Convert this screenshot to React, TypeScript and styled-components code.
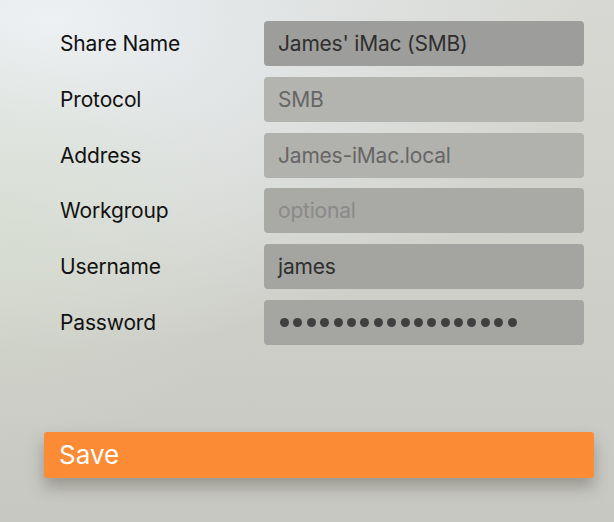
import React from "react";
import styled, { createGlobalStyle } from "styled-components";

const Global = createGlobalStyle`
  html, body { margin: 0; padding: 0; }
  body {
    width: 614px;
    height: 522px;
    overflow: hidden;
    font-family: Inter, "Noto Sans", sans-serif;
  }
`;

const Screen = styled.div`
  width: 614px;
  height: 522px;
  box-sizing: border-box;
  padding: 21px 20px 0 44px;
  background:
    radial-gradient(ellipse 260px 220px at 0% 45%, rgba(214, 222, 204, 0.55), rgba(214, 222, 204, 0) 100%),
    radial-gradient(ellipse 540px 330px at 8% 4%, #eef1f4 0%, #e3e6e7 35%, rgba(214, 215, 210, 0) 100%),
    linear-gradient(180deg, #d7d8d3 0%, #cfd0ca 50%, #c8c8c2 100%);
  display: flex;
  flex-direction: column;
`;

const Form = styled.div`
  display: grid;
  grid-template-columns: 204px 320px;
  grid-auto-rows: 45px;
  row-gap: 10.8px;
  padding-left: 16px;
`;

const Label = styled.div`
  display: flex;
  align-items: center;
  font-size: 21px;
  color: #111;
  letter-spacing: -0.15px;
`;

const Field = styled.div<{ $bg: string; $color: string }>`
  display: flex;
  align-items: center;
  padding: 0 13px 0 14px;
  border-radius: 4px;
  background: ${(p) => p.$bg};
  color: ${(p) => p.$color};
  font-size: 21px;
  letter-spacing: -0.2px;
`;

const Dots = styled.div`
  display: flex;
  gap: 4.4px;
  margin-left: 2px;
`;

const Dot = styled.span`
  width: 9px;
  height: 9px;
  border-radius: 50%;
  background: #3f3f3f;
`;

const SaveButton = styled.button`
  margin-top: 87px;
  width: 550px;
  height: 46px;
  border: none;
  border-radius: 3px;
  background: #fc8b35;
  color: #fff;
  font-family: Inter, "Noto Sans", sans-serif;
  font-size: 26px;
  text-align: left;
  padding: 0 0 0 15px;
  box-shadow: 0 9px 16px rgba(60, 60, 50, 0.35);
`;

type Row = { label: string; value?: string; bg: string; color: string; password?: boolean };

const rows: Row[] = [
  { label: "Share Name", value: "James' iMac (SMB)", bg: "#9d9d9b", color: "#2f2f2f" },
  { label: "Protocol", value: "SMB", bg: "#b3b3b0", color: "#666664" },
  { label: "Address", value: "James-iMac.local", bg: "#b1b1ae", color: "#666664" },
  { label: "Workgroup", value: "optional", bg: "#a9a9a6", color: "#8a8a88" },
  { label: "Username", value: "james", bg: "#a4a4a1", color: "#2f2f2f" },
  { label: "Password", bg: "#a5a5a2", color: "#2f2f2f", password: true },
];

export default function App() {
  return (
    <Screen>
      <Global />
      <Form>
        {rows.map((r) => (
          <React.Fragment key={r.label}>
            <Label>{r.label}</Label>
            <Field $bg={r.bg} $color={r.color}>
              {r.password ? (
                <Dots>
                  {Array.from({ length: 18 }).map((_, i) => (
                    <Dot key={i} />
                  ))}
                </Dots>
              ) : (
                r.value
              )}
            </Field>
          </React.Fragment>
        ))}
      </Form>
      <SaveButton>Save</SaveButton>
    </Screen>
  );
}
